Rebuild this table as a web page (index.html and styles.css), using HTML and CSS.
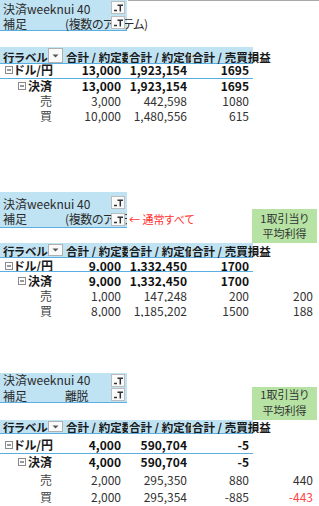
FILE: index.html
```html
<!DOCTYPE html>
<html lang="ja">
<head>
<meta charset="utf-8">
<link rel="stylesheet" href="styles.css">
</head>
<body>

<section class="sec s1">
  <div class="top">
    <div class="filters">
      <div class="frow f1"><span class="fl">決済weeknui 40</span><span class="fv"></span><span class="fbtn"><svg width="12" height="11" viewBox="0 0 12 11"><path d="M2 8.5h3M5.5 3.2h5.5M8.3 3v6.5" stroke="#333" stroke-width="1.5" fill="none"/></svg></span></div>
      <div class="frow f2"><span class="fl">補足</span><span class="fv">(複数のアイテム)</span><span class="fbtn"><svg width="12" height="11" viewBox="0 0 12 11"><path d="M2 8.5h3M5.5 3.2h5.5M8.3 3v6.5" stroke="#333" stroke-width="1.5" fill="none"/></svg></span></div>
    </div>
    <div class="topline"></div>
  </div>
  <div class="row hdr">
    <div class="c ca"><span>行ラベル</span><span class="dd"><svg width="7" height="4" viewBox="0 0 7 4"><path d="M0.5 0.5h6l-3 3z" fill="#555"/></svg></span></div>
    <div class="c">合計 / 約定数</div>
    <div class="c">合計 / 約定価</div>
    <div class="c cd">合計 / 売買損益</div>
    <div class="c e"></div>
  </div>
  <div class="row r1 lined bold">
    <div class="c lv1"><svg class="box" width="8" height="8" viewBox="0 0 8 8"><rect x=".5" y=".5" width="7" height="7" fill="#fff" stroke="#8a8a8a"/><path d="M2 4h4" stroke="#333"/></svg><span>ドル/円</span></div>
    <div class="c num nb">13,000</div>
    <div class="c num">1,923,154</div>
    <div class="c num">1695</div>
    <div class="c e"></div>
  </div>
  <div class="row r2 bold">
    <div class="c lv2"><svg class="box" width="8" height="8" viewBox="0 0 8 8"><rect x=".5" y=".5" width="7" height="7" fill="#fff" stroke="#8a8a8a"/><path d="M2 4h4" stroke="#333"/></svg><span>決済</span></div>
    <div class="c num nb">13,000</div>
    <div class="c num">1,923,154</div>
    <div class="c num">1695</div>
    <div class="c e"></div>
  </div>
  <div class="row r3">
    <div class="c lv3">売</div>
    <div class="c num nb">3,000</div>
    <div class="c num">442,598</div>
    <div class="c num">1080</div>
    <div class="c e"></div>
  </div>
  <div class="row r4">
    <div class="c lv3">買</div>
    <div class="c num nb">10,000</div>
    <div class="c num">1,480,556</div>
    <div class="c num">615</div>
    <div class="c e"></div>
  </div>
</section>

<section class="sec s2">
  <div class="top">
    <div class="filters clip">
      <div class="frow f1"><span class="fl">決済weeknui 40</span><span class="fv"></span><span class="fbtn"><svg width="12" height="11" viewBox="0 0 12 11"><path d="M2 8.5h3M5.5 3.2h5.5M8.3 3v6.5" stroke="#333" stroke-width="1.5" fill="none"/></svg></span></div>
      <div class="frow f2"><span class="fl">補足</span><span class="fv">(複数のアイテム)</span><span class="fbtn"><svg width="12" height="11" viewBox="0 0 12 11"><path d="M2 8.5h3M5.5 3.2h5.5M8.3 3v6.5" stroke="#333" stroke-width="1.5" fill="none"/></svg></span></div>
    </div>
    <div class="note">← 通常すべて</div>
    <div class="avg">1取引当り<br>平均利得</div>
  </div>
  <div class="row hdr">
    <div class="c ca"><span>行ラベル</span><span class="dd"><svg width="7" height="4" viewBox="0 0 7 4"><path d="M0.5 0.5h6l-3 3z" fill="#555"/></svg></span></div>
    <div class="c">合計 / 約定数</div>
    <div class="c">合計 / 約定価</div>
    <div class="c cd">合計 / 売買損益</div>
    <div class="c e"></div>
  </div>
  <div class="row r1 lined bold">
    <div class="c lv1"><svg class="box" width="8" height="8" viewBox="0 0 8 8"><rect x=".5" y=".5" width="7" height="7" fill="#fff" stroke="#8a8a8a"/><path d="M2 4h4" stroke="#333"/></svg><span>ドル/円</span></div>
    <div class="c num nb">9,000</div>
    <div class="c num">1,332,450</div>
    <div class="c num">1700</div>
    <div class="c e"></div>
  </div>
  <div class="row r2 bold">
    <div class="c lv2"><svg class="box" width="8" height="8" viewBox="0 0 8 8"><rect x=".5" y=".5" width="7" height="7" fill="#fff" stroke="#8a8a8a"/><path d="M2 4h4" stroke="#333"/></svg><span>決済</span></div>
    <div class="c num nb">9,000</div>
    <div class="c num">1,332,450</div>
    <div class="c num">1700</div>
    <div class="c e"></div>
  </div>
  <div class="row r3">
    <div class="c lv3">売</div>
    <div class="c num nb">1,000</div>
    <div class="c num">147,248</div>
    <div class="c num">200</div>
    <div class="c num e">200</div>
  </div>
  <div class="row r4">
    <div class="c lv3">買</div>
    <div class="c num nb">8,000</div>
    <div class="c num">1,185,202</div>
    <div class="c num">1500</div>
    <div class="c num e">188</div>
  </div>
</section>

<section class="sec s3">
  <div class="top">
    <div class="filters">
      <div class="frow f1"><span class="fl">決済weeknui 40</span><span class="fv"></span><span class="fbtn"><svg width="12" height="11" viewBox="0 0 12 11"><path d="M2 8.5h3M5.5 3.2h5.5M8.3 3v6.5" stroke="#333" stroke-width="1.5" fill="none"/></svg></span></div>
      <div class="frow f2"><span class="fl">補足</span><span class="fv">離脱</span><span class="fbtn"><svg width="12" height="11" viewBox="0 0 12 11"><path d="M2 8.5h3M5.5 3.2h5.5M8.3 3v6.5" stroke="#333" stroke-width="1.5" fill="none"/></svg></span></div>
    </div>
    <div class="avg">1取引当り<br>平均利得</div>
  </div>
  <div class="row hdr">
    <div class="c ca"><span>行ラベル</span><span class="dd"><svg width="7" height="4" viewBox="0 0 7 4"><path d="M0.5 0.5h6l-3 3z" fill="#555"/></svg></span></div>
    <div class="c">合計 / 約定数</div>
    <div class="c">合計 / 約定価</div>
    <div class="c cd">合計 / 売買損益</div>
    <div class="c e"></div>
  </div>
  <div class="row r1 lined bold">
    <div class="c lv1"><svg class="box" width="8" height="8" viewBox="0 0 8 8"><rect x=".5" y=".5" width="7" height="7" fill="#fff" stroke="#8a8a8a"/><path d="M2 4h4" stroke="#333"/></svg><span>ドル/円</span></div>
    <div class="c num nb">4,000</div>
    <div class="c num">590,704</div>
    <div class="c num">-5</div>
    <div class="c e"></div>
  </div>
  <div class="row r2 bold">
    <div class="c lv2"><svg class="box" width="8" height="8" viewBox="0 0 8 8"><rect x=".5" y=".5" width="7" height="7" fill="#fff" stroke="#8a8a8a"/><path d="M2 4h4" stroke="#333"/></svg><span>決済</span></div>
    <div class="c num nb">4,000</div>
    <div class="c num">590,704</div>
    <div class="c num">-5</div>
    <div class="c e"></div>
  </div>
  <div class="row r3">
    <div class="c lv3">売</div>
    <div class="c num nb">2,000</div>
    <div class="c num">295,350</div>
    <div class="c num">880</div>
    <div class="c num e">440</div>
  </div>
  <div class="row r4">
    <div class="c lv3">買</div>
    <div class="c num nb">2,000</div>
    <div class="c num">295,354</div>
    <div class="c num">-885</div>
    <div class="c num e neg">-443</div>
  </div>
</section>

</body>
</html>
```

FILE: styles.css
```css
html, body {
  margin: 0;
  padding: 0;
  background: #fff;
}

body {
  width: 319px;
  height: 506px;
  overflow: hidden;
  font-family: "Noto Sans CJK JP", "Noto Sans", sans-serif;
  font-size: 12px;
  color: #2a2a2a;
  font-feature-settings: "palt";
}

.sec {
  width: 317px;
}

.s2 { margin-top: 68px; }
.s3 { margin-top: 56px; }

/* top area: filters, notes, green box */
.top {
  display: grid;
  grid-template-columns: 64px 64px 63px 62px 64px;
}

.s1 .top { grid-template-rows: 15px 16px 16px; }
.s2 .top { grid-template-rows: 18px 18px 15px; }
.s3 .top { grid-template-rows: 15px 15px 17px; }

.filters {
  grid-column: 1 / 3;
  grid-row: 1 / 3;
  width: 127px;
  background: #c0e3f4;
  border-bottom: 1px solid #5aaee0;
  display: flex;
  flex-direction: column;
}

.filters.clip { overflow: hidden; }

.frow {
  display: grid;
  grid-template-columns: 63px 48px 14px 2px;
  line-height: 12px;
  white-space: nowrap;
}

.s1 .f1 { height: 15px; --fp: 3px; }
.s1 .f2 { height: 15px; --fp: 3px; }
.s2 .f1 { height: 18px; --fp: 6px; }
.s2 .f2 { height: 17px; --fp: 3px; }
.s3 .f1 { height: 15px; --fp: 1px; }
.s3 .f2 { height: 14px; --fp: 2px; }

.fl {
  padding-left: 3px;
  padding-top: var(--fp);
}

.fv {
  padding-left: 2px;
  padding-top: var(--fp);
  letter-spacing: -0.4px;
}

.fbtn {
  align-self: end;
  margin-bottom: 1px;
  width: 14px;
  height: 13px;
  box-sizing: border-box;
  background: #fbfbfb;
  border: 1px solid #bcbcbc;
  display: flex;
  align-items: center;
  justify-content: center;
}

.topline {
  grid-column: 3 / 6;
  grid-row: 1;
  margin-right: -2px;
  border-top: 1px solid #a8a8a8;
}

.note {
  grid-column: 3 / 5;
  grid-row: 2;
  padding-left: 1px;
  padding-top: 3px;
  line-height: 12px;
  font-size: 11px;
  color: #ff3030;
  white-space: nowrap;
}

.avg {
  grid-column: 5;
  grid-row: 2 / 4;
  margin-left: -1px;
  margin-top: -1px;
  background: #b6e3a3;
  color: #333;
  font-size: 11px;
  text-align: center;
  line-height: 15.5px;
  display: flex;
  flex-direction: column;
  justify-content: center;
}

.s3 .avg {
  justify-content: flex-start;
}

/* pivot rows */
.row {
  display: grid;
  grid-template-columns: 64px 64px 63px 62px 64px;
  height: var(--h);
}

.c {
  box-sizing: border-box;
  height: 100%;
  padding-top: var(--p);
  line-height: 12px;
  white-space: nowrap;
  overflow: hidden;
  display: flex;
  align-items: flex-start;
}

.hdr .c {
  font-size: 11.5px;
  font-weight: 700;
  color: #1a1a1a;
}

.hdr .c:not(.e) {
  background: #c0e3f4;
  border-bottom: 1px solid #5aaee0;
}

.hdr .c:nth-child(2) { padding-left: 2px; }
.hdr .c:nth-child(3) { padding-left: 1px; }
.hdr .cd { padding-left: 1px; overflow: visible; }

.ca {
  padding-left: 3px;
  justify-content: space-between;
}

.dd {
  flex: none;
  width: 15px;
  height: calc(var(--h) - 2px);
  margin-top: calc(1px - var(--p));
  margin-right: 1px;
  box-sizing: border-box;
  background: #fafafa;
  border: 1px solid #b0b0b0;
  display: flex;
  align-items: center;
  justify-content: center;
}

.lined .c:not(.e) {
  border-bottom: 1px solid #5aaee0;
}

.bold .c {
  font-weight: 700;
  color: #1a1a1a;
}

.num {
  justify-content: flex-end;
  padding-right: 4px;
  color: #333;
}

.bold .num { color: #111; }

.nb { padding-right: 7px; }

.lv1 { padding-left: 5px; gap: 1px; }
.lv2 { padding-left: 18px; gap: 2px; }
.lv3 { padding-left: 40px; color: #444; }

.box {
  flex: none;
  margin-top: 2px;
}

.neg { color: #ff4545; }

/* vertical metrics per section */
.s1 .hdr { --h: 17px; --p: 4px; }
.s1 .r1 { --h: 15px; --p: 0px; }
.s1 .r2, .s1 .r3, .s1 .r4 { --h: 15px; --p: 1px; }

.s2 .hdr { --h: 14px; --p: 2px; }
.s2 .r1, .s2 .r2, .s2 .r3, .s2 .r4 { --h: 15px; --p: 3px; }

.s3 .hdr { --h: 13px; --p: 1px; }
.s3 .r1 { --h: 21px; --p: 6px; }
.s3 .r2 { --h: 17px; --p: 2px; }
.s3 .r3 { --h: 18px; --p: 3px; }
.s3 .r4 { --h: 17px; --p: 2px; }
```
